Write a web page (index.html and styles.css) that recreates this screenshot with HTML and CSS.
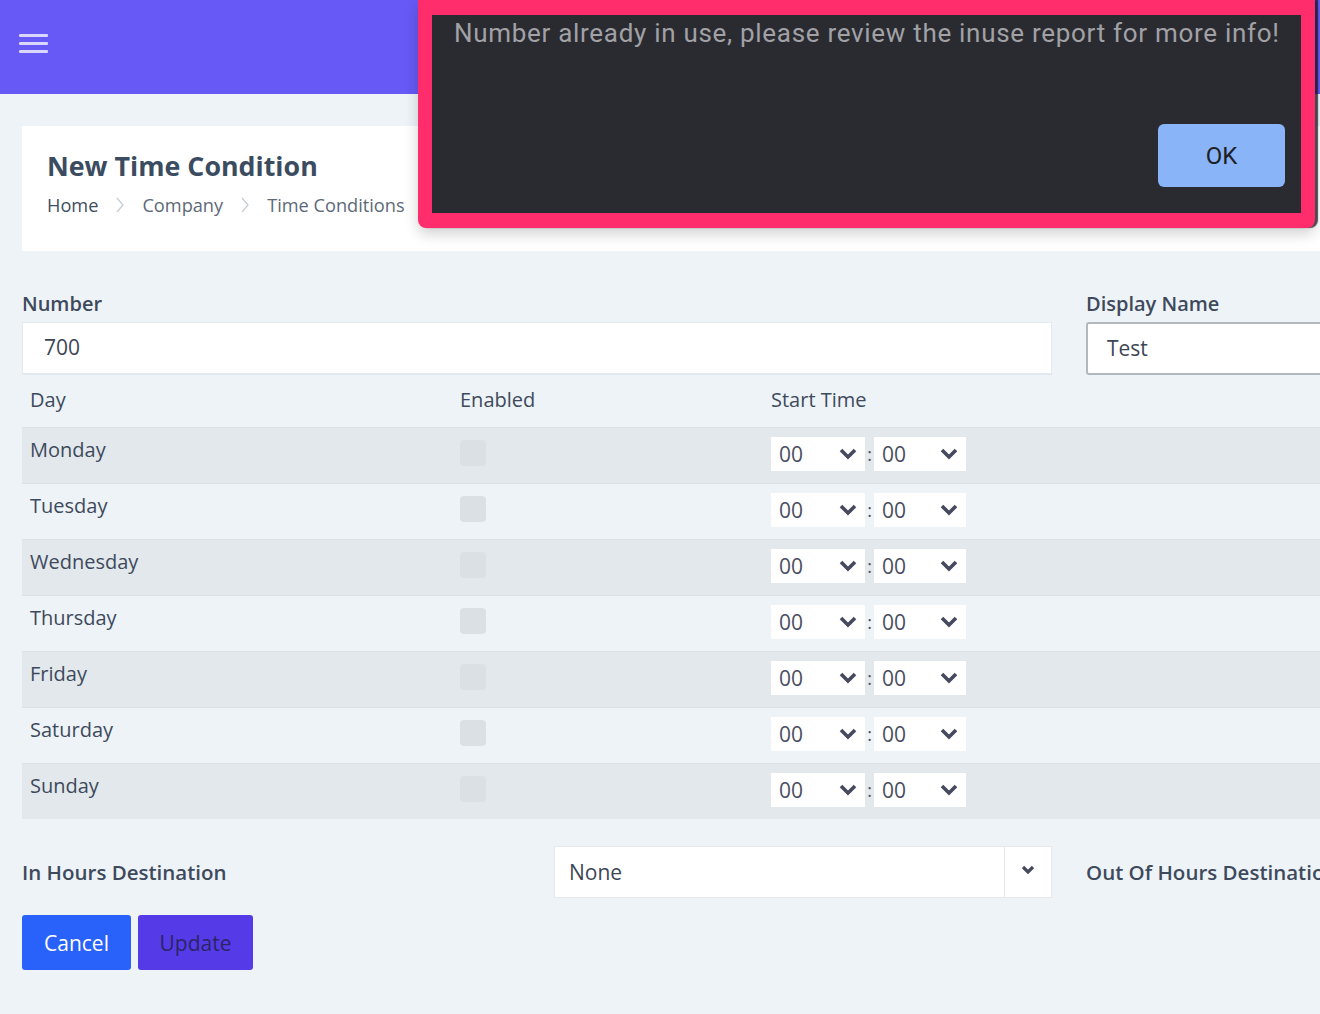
FILE: index.html
```html
<!DOCTYPE html>
<html>
<head>
<meta charset="utf-8">
<link rel="stylesheet" href="styles.css">
</head>
<body>
<header class="topbar">
  <div class="hamburger"><span></span><span></span><span></span></div>
</header>
<main class="main">
  <section class="card">
    <h1 class="title">New Time Condition</h1>
    <nav class="crumbs">
      <span class="crumb crumb-home">Home</span>
      <svg class="sep" viewBox="0 0 10 18" width="10" height="18"><path d="M2 2 L8 9 L2 16" fill="none" stroke="#c8cdd3" stroke-width="1.3"/></svg>
      <span class="crumb">Company</span>
      <svg class="sep" viewBox="0 0 10 18" width="10" height="18"><path d="M2 2 L8 9 L2 16" fill="none" stroke="#c8cdd3" stroke-width="1.3"/></svg>
      <span class="crumb">Time Conditions</span>
    </nav>
  </section>

  <form class="form">
    <div class="grid4">
      <div class="field span2">
        <label class="label">Number</label>
        <div class="input">700</div>
      </div>
      <div class="field span2">
        <label class="label">Display Name</label>
        <div class="input input-outlined">Test</div>
      </div>
    </div>

    <div class="table">
      <div class="trow thead">
        <div class="c-day">Day</div>
        <div class="c-en">Enabled</div>
        <div class="c-time">Start Time</div>
      </div>
      <div class="trow odd">
        <div class="c-day">Monday</div>
        <div class="c-en"><span class="check"></span></div>
        <div class="c-time"><div class="tsel">00<svg viewBox="0 0 20 14" width="20" height="14"><path d="M3 3 L10 10 L17 3" fill="none" stroke="#474a5f" stroke-width="3.6"/></svg></div><span class="colon">:</span><div class="tsel">00<svg viewBox="0 0 20 14" width="20" height="14"><path d="M3 3 L10 10 L17 3" fill="none" stroke="#474a5f" stroke-width="3.6"/></svg></div></div>
      </div>
      <div class="trow even">
        <div class="c-day">Tuesday</div>
        <div class="c-en"><span class="check"></span></div>
        <div class="c-time"><div class="tsel">00<svg viewBox="0 0 20 14" width="20" height="14"><path d="M3 3 L10 10 L17 3" fill="none" stroke="#474a5f" stroke-width="3.6"/></svg></div><span class="colon">:</span><div class="tsel">00<svg viewBox="0 0 20 14" width="20" height="14"><path d="M3 3 L10 10 L17 3" fill="none" stroke="#474a5f" stroke-width="3.6"/></svg></div></div>
      </div>
      <div class="trow odd">
        <div class="c-day">Wednesday</div>
        <div class="c-en"><span class="check"></span></div>
        <div class="c-time"><div class="tsel">00<svg viewBox="0 0 20 14" width="20" height="14"><path d="M3 3 L10 10 L17 3" fill="none" stroke="#474a5f" stroke-width="3.6"/></svg></div><span class="colon">:</span><div class="tsel">00<svg viewBox="0 0 20 14" width="20" height="14"><path d="M3 3 L10 10 L17 3" fill="none" stroke="#474a5f" stroke-width="3.6"/></svg></div></div>
      </div>
      <div class="trow even">
        <div class="c-day">Thursday</div>
        <div class="c-en"><span class="check"></span></div>
        <div class="c-time"><div class="tsel">00<svg viewBox="0 0 20 14" width="20" height="14"><path d="M3 3 L10 10 L17 3" fill="none" stroke="#474a5f" stroke-width="3.6"/></svg></div><span class="colon">:</span><div class="tsel">00<svg viewBox="0 0 20 14" width="20" height="14"><path d="M3 3 L10 10 L17 3" fill="none" stroke="#474a5f" stroke-width="3.6"/></svg></div></div>
      </div>
      <div class="trow odd">
        <div class="c-day">Friday</div>
        <div class="c-en"><span class="check"></span></div>
        <div class="c-time"><div class="tsel">00<svg viewBox="0 0 20 14" width="20" height="14"><path d="M3 3 L10 10 L17 3" fill="none" stroke="#474a5f" stroke-width="3.6"/></svg></div><span class="colon">:</span><div class="tsel">00<svg viewBox="0 0 20 14" width="20" height="14"><path d="M3 3 L10 10 L17 3" fill="none" stroke="#474a5f" stroke-width="3.6"/></svg></div></div>
      </div>
      <div class="trow even">
        <div class="c-day">Saturday</div>
        <div class="c-en"><span class="check"></span></div>
        <div class="c-time"><div class="tsel">00<svg viewBox="0 0 20 14" width="20" height="14"><path d="M3 3 L10 10 L17 3" fill="none" stroke="#474a5f" stroke-width="3.6"/></svg></div><span class="colon">:</span><div class="tsel">00<svg viewBox="0 0 20 14" width="20" height="14"><path d="M3 3 L10 10 L17 3" fill="none" stroke="#474a5f" stroke-width="3.6"/></svg></div></div>
      </div>
      <div class="trow odd">
        <div class="c-day">Sunday</div>
        <div class="c-en"><span class="check"></span></div>
        <div class="c-time"><div class="tsel">00<svg viewBox="0 0 20 14" width="20" height="14"><path d="M3 3 L10 10 L17 3" fill="none" stroke="#474a5f" stroke-width="3.6"/></svg></div><span class="colon">:</span><div class="tsel">00<svg viewBox="0 0 20 14" width="20" height="14"><path d="M3 3 L10 10 L17 3" fill="none" stroke="#474a5f" stroke-width="3.6"/></svg></div></div>
      </div>
    </div>

    <div class="grid4 dest">
      <div class="dest-label">In Hours Destination</div>
      <div class="dsel">
        <span class="dsel-val">None</span>
        <span class="dsel-arrow"><svg viewBox="0 0 16 12" width="16" height="12"><path d="M3 3 L8 8 L13 3" fill="none" stroke="#474a5f" stroke-width="3.2"/></svg></span>
      </div>
      <div class="dest-label">Out Of Hours Destination</div>
      <div class="dsel">
        <span class="dsel-val">None</span>
        <span class="dsel-arrow"><svg viewBox="0 0 16 12" width="16" height="12"><path d="M3 3 L8 8 L13 3" fill="none" stroke="#474a5f" stroke-width="3.2"/></svg></span>
      </div>
    </div>

    <div class="actions">
      <button type="button" class="btn btn-cancel">Cancel</button>
      <button type="button" class="btn btn-update">Update</button>
    </div>
  </form>
</main>

<div class="alert">
  <div class="alert-inner">
    <p class="alert-msg">Number already in use, please review the inuse report for more info!</p>
    <div class="alert-actions"><button type="button" class="alert-ok">OK</button></div>
  </div>
</div>
</body>
</html>
```

FILE: styles.css
```css
html, body {
  margin: 0;
  padding: 0;
  overflow: hidden;
  height: 1014px;
}
body {
  background: #edf3f7;
  font-family: "Open Sans", "Noto Sans", sans-serif;
  color: #3d4b5e;
  width: 2140px;
  position: relative;
}
.topbar {
  height: 94px;
  background: #6659f5;
  display: flex;
  align-items: center;
  padding-left: 19px;
  width: 1320px;
  box-sizing: border-box;
}
.hamburger {
  display: flex;
  flex-direction: column;
  gap: 5px;
  width: 29px;
  margin-top: -8px;
}
.hamburger span {
  display: block;
  height: 3px;
  background: #d9d5fd;
  border-radius: 1px;
}
.main {
  padding: 32px 22px 0 22px;
}
.card {
  background: #fff;
  width: 2094px;
  box-sizing: border-box;
  padding: 22px 25px 33px 25px;
}
.title {
  margin: 0;
  font-size: 26.8px;
  line-height: 36px;
  font-weight: 700;
  color: #3b4c60;
}
.crumbs {
  margin-top: 8px;
  display: flex;
  align-items: center;
  height: 26px;
  font-size: 18.2px;
  color: #5d6977;
}
.crumb-home { color: #3f4d5e; }
.sep { margin: 0 17px 0 17px; }

.form { width: 2094px; }
.grid4 {
  display: grid;
  grid-template-columns: repeat(4, 498px);
  column-gap: 34px;
}
.span2 { grid-column: span 2; }
.field { display: flex; flex-direction: column; }
.label {
  margin-top: 39px;
  font-size: 20px;
  line-height: 28px;
  font-weight: 600;
  color: #3e4a5c;
}
.input {
  margin-top: 4px;
  height: 53px;
  box-sizing: border-box;
  background: #fff;
  border: 1px solid #e3e9ee;
  border-bottom-width: 2px;
  padding-left: 21px;
  font-size: 21px;
  line-height: 48px;
  color: #3d4656;
}
.input-outlined {
  border: 2px solid #b3b8bd;
  border-radius: 3px;
  padding-left: 19px;
}

.table { margin-top: 2px; }
.trow {
  display: grid;
  grid-template-columns: 430px 310px 1fr;
  font-size: 20px;
  line-height: 26px;
  color: #3e4a5c;
  box-sizing: border-box;
}
.trow > div { padding: 10px 8px 0 8px; box-sizing: border-box; }
.thead { height: 50px; }
.thead > div { padding-top: 10px; }
.trow.odd, .trow.even { height: 56px; border-top: 1px solid #dbe2e7; }
.trow.odd > div, .trow.even > div { padding-top: 9px; }
.trow.odd { background: #e2e8ec; }
.trow.even { background: #edf3f7; }
.check {
  display: block;
  width: 26px;
  height: 26px;
  margin-top: 3px;
  border-radius: 4px;
  background: #dbe0e5;
}
.c-time { display: flex; align-items: flex-start; }
.trow .c-time { padding-left: 9px; }
.tsel {
  width: 94px;
  height: 34px;
  background: #fff;
  display: flex;
  align-items: center;
  justify-content: space-between;
  padding: 0 7px 0 8px;
  box-sizing: border-box;
  font-size: 21px;
  color: #4a4e60;
}
.tsel + .colon + .tsel { width: 92px; }
.colon {
  width: 9px;
  text-align: center;
  font-size: 18px;
  line-height: 34px;
  color: #4a4e60;
}

.dest { margin-top: 27px; align-items: center; }
.dest-label {
  font-size: 20.5px;
  font-weight: 600;
  color: #3e4a5c;
  white-space: nowrap;
}
.dsel {
  height: 52px;
  background: #fff;
  border: 1px solid #e3e8ec;
  box-sizing: border-box;
  display: flex;
  align-items: stretch;
}
.dsel-val {
  flex: 1;
  padding-left: 14px;
  font-size: 21px;
  line-height: 50px;
  color: #3d4656;
}
.dsel-arrow {
  width: 47px;
  border-left: 1px solid #e3e8ec;
  display: flex;
  align-items: center;
  justify-content: center;
  padding-bottom: 4px;
  box-sizing: border-box;
}
.actions {
  margin-top: 17px;
  display: flex;
  gap: 7px;
}
.btn {
  height: 55px;
  border: none;
  border-radius: 3px;
  font-family: inherit;
  font-size: 21px;
  padding: 0;
}
.btn-cancel { width: 109px; background: #2962fb; color: #fff; }
.btn-update { width: 115px; background: #553be8; color: #2b2466; }

.alert {
  position: absolute;
  left: 418px;
  top: 0;
  width: 897px;
  height: 228px;
  box-sizing: border-box;
  background: #ff2d6c;
  border-radius: 0 0 8px 8px;
  padding: 15px 14px 15px 14px;
  box-shadow: 3px 0 1px rgba(20, 20, 30, 0.75), 0 6px 14px rgba(0, 0, 0, 0.18);
}
.alert-inner {
  height: 100%;
  background: #2a2b30;
  display: flex;
  flex-direction: column;
  justify-content: space-between;
  padding: 3px 16px 26px 22px;
  box-sizing: border-box;
}
.alert-msg {
  margin: 0;
  font-family: Roboto, "Liberation Sans", sans-serif;
  font-size: 26px;
  letter-spacing: 0.7px;
  line-height: 30px;
  color: #a1a1a6;
  white-space: nowrap;
}
.alert-actions { display: flex; justify-content: flex-end; }
.alert-ok {
  width: 127px;
  height: 63px;
  border: none;
  border-radius: 6px;
  background: #8ab4f8;
  color: #1d1f24;
  font-family: Roboto, "Liberation Sans", sans-serif;
  font-size: 24px;
  padding: 0;
}
```
